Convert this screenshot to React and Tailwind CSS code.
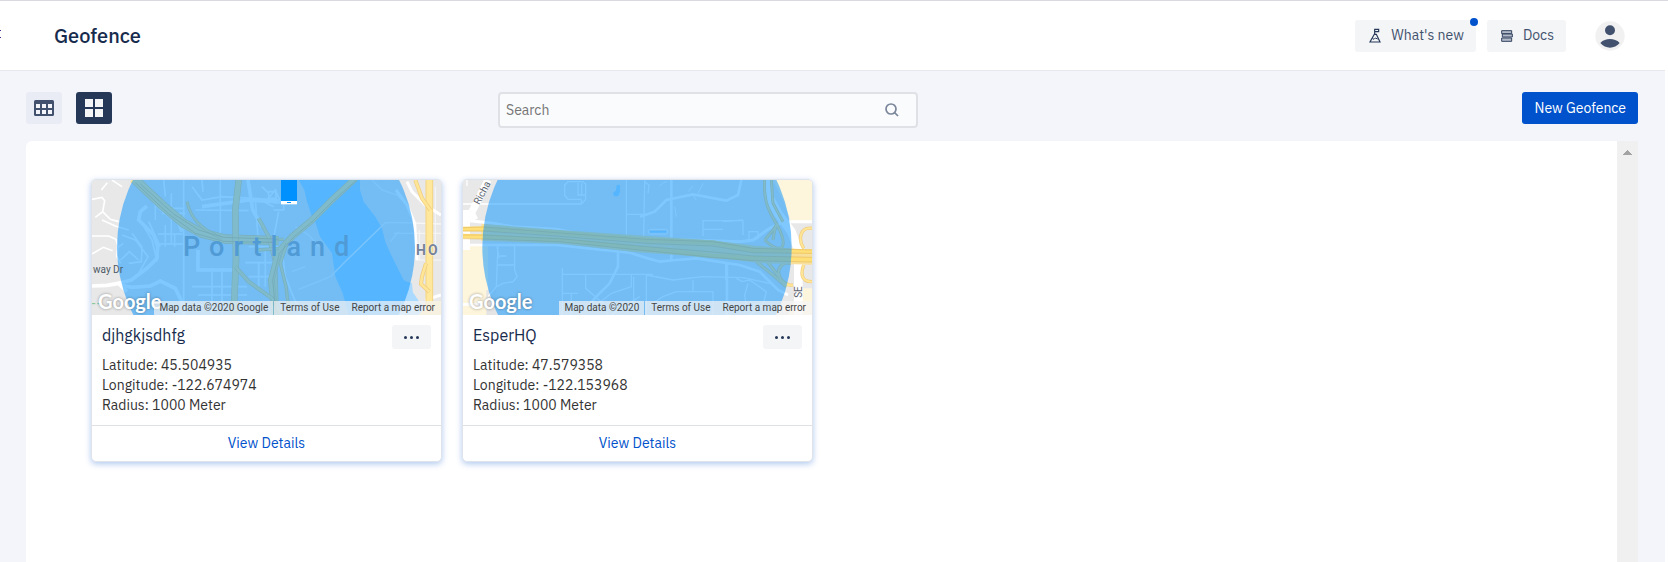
import React from "react";

function FlagPeakIcon() {
  return (
    <svg width="12" height="15" viewBox="0 0 36 45" fill="none" stroke="#253858" strokeWidth="3.500" aria-hidden="true">
      <path d="M17 20V2M17 4h12v7H17" />
      <path d="M16 19 3 42h30L22 19z" />
      <path d="M10 31l5 3 4-4 7 3" strokeWidth="3" />
    </svg>
  );
}

function BooksIcon() {
  return (
    <svg width="12" height="12" viewBox="0 0 36 36" fill="#b3bac8" stroke="#344563" strokeWidth="3" strokeLinejoin="round" aria-hidden="true">
      <rect x="2" y="2" width="30" height="9" />
      <rect x="4" y="12" width="30" height="9" />
      <rect x="2" y="24" width="30" height="10" />
    </svg>
  );
}

function AvatarIcon() {
  return (
    <svg width="30" height="30" viewBox="0 0 90 90" aria-hidden="true">
      <circle cx="45" cy="45" r="44" fill="#f1f1f2" />
      <circle cx="45" cy="28" r="15" fill="#42526e" />
      <path d="M16 66c8-9 18-12 29-12s21 3 29 12c-8 9-18 14-29 14s-21-5-29-14z" fill="#42526e" />
    </svg>
  );
}

function TableIcon() {
  return (
    <svg width="20" height="16" viewBox="0 0 20 16" aria-hidden="true">
      <rect width="20" height="16" rx="1.500" fill="#42526e" />
      <path d="M2 4h4v4H2zM8 4h4v4H8zM14 4h4v4h-4zM2 10h4v4H2zM8 10h4v4H8zM14 10h4v4h-4z" fill="#f4f5fb" />
    </svg>
  );
}

function GridIcon() {
  return (
    <svg width="18" height="18" viewBox="0 0 18 18" fill="#f4f5f7" aria-hidden="true">
      <path d="M0 0h8v8H0zM10 0h8v8h-8zM0 10h8v8H0zM10 10h8v8h-8z" />
    </svg>
  );
}

function SearchIcon() {
  return (
    <svg width="14" height="14" viewBox="0 0 14 14" fill="none" stroke="#7a869a" strokeWidth="1.700" aria-hidden="true">
      <circle cx="6" cy="6" r="5" />
      <path d="M9.500 9.500 13 13" />
    </svg>
  );
}

function Highway({ d, width = 14 }) {
  return (
    <>
      <path d={d} fill="none" stroke="#efcb7c" strokeWidth={width} />
      <path d={d} fill="none" stroke="#ffe596" strokeWidth={width - 4} />
    </>
  );
}

function PortlandMap() {
  return (
    <svg className="block h-full w-full" viewBox="0 0 1047 405" preserveAspectRatio="xMidYMid slice" aria-hidden="true">
      <rect width="1047" height="405" fill="#e8e8e8" />
      <path
        d="M620 0 637 30 645 65 660 110 668 120 684 170 700 192 720 220 730 290 752 340 770 405H930L955 350 962 335 960 310 945 305 935 300 915 260 895 220 880 185 870 145 850 110 815 65 804 30V0Z"
        fill="#aadaff"
      />
      <path d="M958 330 985 370 1000 385 980 405H930Z" fill="#aadaff" />
      <g fill="none" stroke="#fff" strokeWidth="5">
        <path d="M0 58 30 52 38 62 32 95 10 112M32 95 55 118 80 125M46 8 28 30M60 0 90 20M0 168H50L72 178 78 200 74 228 86 250M0 222 34 202 62 212M30 120 70 138 110 150M74 205 94 190" />
        <path d="M120 160 150 200 148 245 110 250M90 165 130 180 168 230 140 280M150 130 180 180 195 245M170 125 205 200M86 240 112 215 140 240" />
        <path d="M190 55V120M238 40V190M275 0V400M236 85H275M210 100H280M198 162H272M198 192H272M220 135V200M248 160V200" />
        <path d="M300 20 330 60 390 50 480 55 560 60M310 90 470 92M385 0V160M490 60 500 200M215 0 220 50M330 0 333 35" />
        <path d="M360 270V405M390 270V405M300 320H465M318 345H465M282 375H440M470 200H570M460 248H560M500 245V330M470 290H540M520 210V320" />
        <path d="M560 95 540 200M505 60 545 80M510 20 530 40M525 60 550 30 565 65M570 210 580 290 600 340 625 400" />
        <path d="M530 35h22v20h-22zM545 68h30v22h-30" />
      </g>
      <g fill="none" stroke="#fff" strokeWidth="11">
        <path d="M80 310 118 300 165 265 195 235 197 200 185 165 140 120 145 95 165 78" />
        <path d="M84 315 120 322 175 318 205 303 250 325 272 370 276 405M175 52 205 85 238 112M330 80 470 60 560 65M468 0 482 90 510 140" />
        <path d="M0 318 45 316 80 310 105 335M185 50 210 75 250 100 270 155M318 210V270H425" />
      </g>
      <g fill="none" stroke="#f7f7f7" strokeWidth="4">
        <path d="M620 328 715 290 770 235 880 128H930L1047 132M840 0 870 30 915 45 930 60M895 185 920 155M905 160H965M610 140 650 165 680 200M600 275 640 260" />
        <path d="M965 160H1047M970 240H1047M982 150V240M1030 20V210" strokeWidth="3" />
      </g>
      <path d="M945 5 960 35 1000 75 1047 105M912 30 945 75 968 130 975 240M1000 360 1047 345" fill="none" stroke="#fff" strokeWidth="9" />
      <Highway width={28} d="M125 -5 210 75 275 130 330 160 400 177 560 182" />
      <Highway d="M285 65C295 110 320 145 390 175" width={9} />
      <Highway width={20} d="M440 0 430 90 432 240 425 405" />
      <Highway width={12} d="M500 115 530 170 550 250 555 405" />
      <Highway width={20} d="M790 -5 720 60 660 120 600 170 560 215 538 300 548 405" />
      <Highway width={12} d="M430 260 470 305 540 355 570 405" />
      <Highway width={10} d="M585 190 565 250 582 320 592 405M500 180 575 178M500 210 560 205" />
      <g fill="none" stroke="#dfb35e" strokeWidth="2">
        <path d="M145 12 245 102 320 150 395 172 560 178" />
        <path d="M130 8 230 102 310 160 395 184 550 188M794 0 724 62 664 122 604 172 562 220 542 300 552 405" />
      </g>
      <path d="M1012 -5V405" stroke="#f3d484" strokeWidth="23" />
      <path d="M1012 -5V405" stroke="#ffe89c" strokeWidth="17" />
      <Highway width={12} d="M970 0 990 55 1015 90M1002 250 990 290 987 312 1012 335" />
      <path d="M980 405 1020 365 1047 362V405Z" fill="#fce6b5" />
      <path d="M0 371H28" stroke="#79c58b" strokeWidth="3" strokeDasharray="10 6" />
      <circle cx="522" cy="201" r="447" fill="#0091ff" fillOpacity=".5" />
      <rect x="567" y="-2" width="48" height="75" fill="#fff" />
      <rect x="567" y="-2" width="48" height="65" fill="#0091ff" />
      <rect x="585" y="66" width="12" height="3" fill="#0091ff" />
    </svg>
  );
}

function EsperMap() {
  return (
    <svg className="block h-full w-full" viewBox="0 0 1047 405" preserveAspectRatio="xMidYMid slice" aria-hidden="true">
      <rect width="1047" height="405" fill="#e8e8e8" />
      <path d="M0 195H75V405H0ZM930 0H1047V125H985L960 60ZM1010 325H1047V405H975Z" fill="#fdf5dc" />
      <path d="M70 330H100V405H70Z" fill="#e4e4e4" />
      <path d="M461 15h10v22l-6 12h-12l-3-10 9-8zM560 152h50v6h-50z" fill="#aadaff" />
      <rect x="556" y="148" width="58" height="14" rx="6" fill="none" stroke="#fff" strokeWidth="3" />
      <g fill="none" stroke="#fff" strokeWidth="4">
        <path d="M0 72H355L368 58V12L360 5H315L305 15V45L315 58H355M345 8V45H366M356 10V45M355 72V58" />
        <path d="M490 0V165M490 103H548M545 0 542 170M555 40 558 15 545 5M12 0V18" />
        <path d="M105 195 100 320M155 195V270L162 290 150 305 120 310 100 320 75 350M102 255H155M110 228H130M102 200 108 235" />
        <path d="M298 265V405M298 283H570M368 283V325L420 370 435 405M505 285V320L445 340 400 375M512 290V370L480 385M300 340H345M325 340V405M445 405 530 350" />
        <path d="M720 168V122H840V165M780 125 840 120M720 148H780M858 185V155H885V175L870 180" />
        <path d="M550 285 630 300 720 290 840 293 920 310M690 300V335M560 375 600 350 640 335H750V405M550 285V405M820 295 838 305 860 300 910 335 900 375 860 405M855 310 845 345 850 380" />
        <path d="M675 35 690 18M685 40 700 60M720 10 705 40M635 80 640 110M590 18 600 8 612 5" strokeWidth="3" />
      </g>
      <g fill="none" stroke="#fff" strokeWidth="9">
        <path d="M20 122 90 130 150 140 280 148 340 160 460 172 620 178 830 185 870 180 920 145 960 125H1047" />
        <path d="M0 195H280L420 210 500 218 570 240M465 212V260L440 310 400 350 370 385M625 0V245M792 245V405M531 110 575 95 610 60 690 43 790 62 825 45 835 0M531 228 590 245 640 240 700 235 830 255 890 275 945 330 975 345M790 250V300" strokeWidth="8" />
        <path d="M0 373H60" />
      </g>
      <path d="M75 0 30 90 0 140M20 90 35 120M10 90V210" fill="none" stroke="#fff" strokeWidth="22" />
      <path d="M914 0 918 50 945 100 985 155 1006 210V405" fill="none" stroke="#fff" strokeWidth="26" />
      <Highway width={9} d="M905 0C900 80 930 110 945 140C975 200 960 230 905 180M925 0 930 70 960 125M905 180C960 120 940 110 930 180" />
      <Highway width={10} d="M1047 145C1010 140 1005 180 1022 205M1047 305C1010 305 1015 275 1022 255M900 230C960 300 960 320 990 315M985 250C940 240 930 300 980 315M880 245 930 285 970 320" />
      <g fill="none">
        <path d="M55 145 280 163 500 178 750 195 870 210 1047 224" stroke="#f8e09a" strokeWidth="27" />
        <path d="M55 170 300 180 520 205 750 220 900 238 1047 242" stroke="#f8e09a" strokeWidth="24" />
        <path d="M0 147 60 146 280 158 550 180 750 188 870 210 1047 215" stroke="#ffdf78" strokeWidth="14" />
        <path d="M0 168 60 170 290 180 550 207 750 228 870 235 1047 239" stroke="#ffdf78" strokeWidth="14" />
        <path d="M0 143 60 141 280 158 550 178 750 185 870 205 1047 210M0 153 60 153 280 168 550 190 750 198 870 218 1047 220M0 165 60 165 290 176 550 200 750 216 870 228 1047 232M0 176 60 177 290 185 550 212 750 232 870 242 1047 246" stroke="#e6bd62" strokeWidth="2" />
      </g>
      <circle cx="522" cy="201" r="464" fill="#0091ff" fillOpacity=".5" />
    </svg>
  );
}

function MapFrame({ children, credit }) {
  return (
    <div className="relative h-[135px] overflow-hidden rounded-t font-[Roboto,sans-serif]">
      {children}
      <span className="absolute bottom-0 left-[6px] font-[Lato,sans-serif] text-[20px] leading-[27px] font-bold text-white [text-shadow:0_0_3px_#0006]">
        Google
      </span>
      <div className="absolute right-0 bottom-0 flex h-[14px] text-[10px] leading-[14px] text-[#444]">
        <span className="bg-[#f5f5f5]/70 px-[5px]">{credit}</span>
        <a href="#terms" className="ml-px bg-[#f5f5f5]/70 px-[6px]">Terms of Use</a>
        <a href="#report" className="bg-[#f5f5f5]/70 px-[6px]">Report a map error</a>
      </div>
    </div>
  );
}

function GeofenceCard({ name, latitude, longitude, radius, map }) {
  return (
    <article className="w-[351px] rounded-[5px] border border-[#dfe3ea] bg-white shadow-[0_2px_6px_#0052cc50]">
      {map}
      <div className="p-[10px]">
        <div className="flex items-start justify-between">
          <h2 className="text-[16px] leading-5 text-[#172b4d]">{name}</h2>
          <button type="button" aria-label={`Options for ${name}`} className="flex h-6 w-[39px] items-center justify-center gap-[3px] rounded-[3px] bg-[#f4f5f7]">
            <i className="size-[3px] rounded-full bg-[#253858]" />
            <i className="size-[3px] rounded-full bg-[#253858]" />
            <i className="size-[3px] rounded-full bg-[#253858]" />
          </button>
        </div>
        <div className="mt-[6px] text-[14px] leading-5 text-[#333]">
          <p>Latitude: {latitude}</p>
          <p>Longitude: {longitude}</p>
          <p>Radius: {radius} Meter</p>
        </div>
      </div>
      <a href="#details" className="block border-t border-[#dfe1e6] text-center text-[14px] leading-[35px] text-[#0052cc]">
        View Details
      </a>
    </article>
  );
}

export default function App() {
  return (
    <div className="flex h-screen flex-col overflow-hidden border-t border-[#d9d9df] bg-white pr-[3px] font-['IBM_Plex_Sans',Roboto,sans-serif]">
      <header className="flex h-[70px] shrink-0 items-center border-b border-[#e6e8ec] pr-10">
        <span className="-mt-[3px] flex w-px flex-col gap-[6px]" aria-hidden="true">
          <i className="h-px bg-[#403294]" />
          <i className="h-px bg-[#403294]" />
        </span>
        <h1 className="ml-[53px] flex-1 text-[20px] leading-6 font-medium text-[#172b4d]">Geofence</h1>
        <div className="flex items-center text-[14px] text-[#42526e]">
          <button type="button" className="relative flex h-8 items-center gap-[10px] rounded-[3px] bg-[#f4f5f7] pr-3 pl-[14px]">
            <FlagPeakIcon />
            What&apos;s new
            <span className="absolute -top-[2px] -right-[2px] size-2 rounded-full bg-[#0052cc]" />
          </button>
          <a href="#docs" className="ml-[11px] flex h-8 items-center gap-[10px] rounded-[3px] bg-[#f4f5f7] pr-3 pl-[14px]">
            <BooksIcon />
            Docs
          </a>
          <button type="button" aria-label="Account" className="ml-[29px]">
            <AvatarIcon />
          </button>
        </div>
      </header>

      <main className="flex min-h-0 flex-1 flex-col bg-[#f4f5fb] pt-[21px] pr-[27px] pl-[26px]">
        <div className="grid grid-cols-[472fr_420fr_720fr] items-start">
          <div className="flex gap-[14px]">
            <button type="button" aria-label="Table view" className="flex h-8 w-9 items-center justify-center rounded-[3px] bg-[#eaecf5]">
              <TableIcon />
            </button>
            <button type="button" aria-label="Card view" className="flex h-8 w-9 items-center justify-center rounded-[3px] bg-[#253858]">
              <GridIcon />
            </button>
          </div>
          <label className="flex h-9 items-center rounded-[4px] border-2 border-[#dfe1e6] bg-[#fafbfc] pr-[17px] pl-[6px]">
            <input type="search" aria-label="Search" placeholder="Search" className="min-w-0 flex-1 bg-transparent text-[14px] text-[#42526e] outline-none placeholder:text-[#757575]" />
            <SearchIcon />
          </label>
          <button type="button" className="h-8 justify-self-end rounded-[3px] bg-[#0052cc] px-3 text-[14px] text-white">
            New Geofence
          </button>
        </div>

        <section className="mt-[13px] flex min-h-0 flex-1 rounded-tl-[6px] bg-white">
          <div className="flex flex-1 flex-wrap content-start items-start gap-5 pt-[38px] pl-[65px]">
            <GeofenceCard
              name="djhgkjsdhfg"
              latitude="45.504935"
              longitude="-122.674974"
              radius={1000}
              map={
                <MapFrame credit="Map data ©2020 Google">
                  <PortlandMap />
                  <span className="absolute top-[51px] left-[91px] text-[27px] leading-[32px] font-medium tracking-[9px] text-[#509bd6]">Portland</span>
                  <span className="absolute top-[62px] left-[324px] text-[14px] leading-4 font-bold tracking-[2px] text-[#75839a] [text-shadow:0_0_2px_#fff]">HO</span>
                  <span className="absolute top-[83px] left-px text-[10px] leading-[14px] text-[#4d5a66]">way Dr</span>
                </MapFrame>
              }
            />
            <GeofenceCard
              name="EsperHQ"
              latitude="47.579358"
              longitude="-122.153968"
              radius={1000}
              map={
                <MapFrame credit="Map data ©2020">
                  <EsperMap />
                  <span className="absolute top-[6px] left-[7px] -rotate-[62deg] text-[10px] leading-[14px] text-[#5c6470]">Richa</span>
                  <span className="absolute top-[105px] left-[330px] -rotate-90 text-[10px] leading-[14px] text-[#5c6470]">SE</span>
                </MapFrame>
              }
            />
          </div>
          <div className="w-[21px] bg-[#f0f0f0] pt-[9px]">
            <svg className="mx-auto" width="9" height="5" viewBox="0 0 9 5" fill="#a3a3a3" shapeRendering="crispEdges" aria-hidden="true">
              <path d="M4 0h1v1h1v1h1v1h1v1h1v1H0V4h1V3h1V2h1V1h1z" />
            </svg>
          </div>
        </section>
      </main>
    </div>
  );
}
